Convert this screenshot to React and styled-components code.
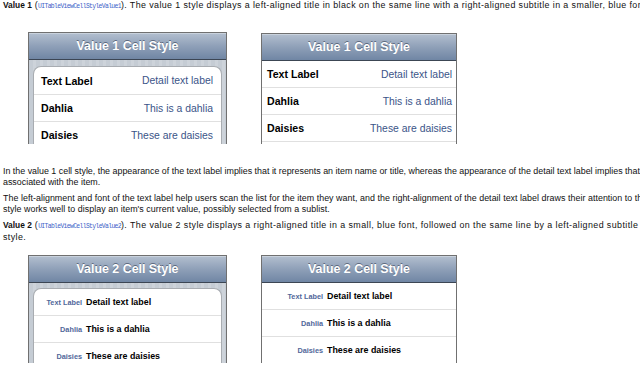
import React from 'react';
import styled, {createGlobalStyle} from 'styled-components';

const GlobalStyle = createGlobalStyle`
  html, body {
    margin: 0;
    background: #fff;
    overflow: hidden;
  }
  body {
    font-family: 'Liberation Sans', Arial, sans-serif;
    color: #111;
  }
`;

const Page = styled.div`
  width: 640px;
  height: 381px;
  overflow: hidden;
  padding: 0 3px;
  box-sizing: border-box;
`;

const Para = styled.p`
  margin: 0 0 5px 0;
  font-size: 8.9px;
  line-height: 11px;
  letter-spacing: ${p => p.$spacing || 0}px;
  white-space: nowrap;

  b {
    font-size: 8.4px;
    letter-spacing: 0;
  }
`;

const Code = styled.code`
  font-family: 'Liberation Mono', 'Courier New', monospace;
  font-size: 6.4px;
  letter-spacing: -0.65px;
  color: #3c62c8;
`;

const FigureRow = styled.div`
  display: flex;
  align-items: flex-start;
  gap: 34px;
  padding: ${p => p.$top}px 0 ${p => p.$bottom}px 25px;
`;

const Frame = styled.div`
  box-sizing: border-box;
  width: ${p => p.$width}px;
  height: ${p => p.$height}px;
  margin-top: ${p => p.$offset || 0}px;
  border: 1px solid #707070;
  border-bottom: none;
  overflow: hidden;
  background: ${p => p.$grouped
    ? 'repeating-linear-gradient(90deg, #c5ccd4 0 4px, #cdd3da 4px 7px)'
    : '#fff'};
`;

const NavBar = styled.div`
  height: ${p => p.$height}px;
  display: flex;
  align-items: center;
  justify-content: center;
  background: linear-gradient(#b3bfcf 0%, #8fa0b8 50%, #7086a4 100%);
  border-bottom: 1px solid #3c4654;
  box-shadow: inset 0 1px 0 #c9d2dd;
  color: #fff;
  font-size: 12.4px;
  font-weight: bold;
  text-shadow: 0 -1px 0 rgba(40, 50, 70, 0.55);
`;

const Card = styled.div`
  margin: ${p => p.$gap}px 4px 0 4px;
  background: #fff;
  border: 1px solid #a8acb1;
  border-bottom: none;
  border-radius: 8px 8px 0 0;
`;

const Row = styled.div`
  height: ${p => p.$height || 27}px;
  box-sizing: border-box;
  display: flex;
  align-items: center;
  gap: 4px;
  justify-content: ${p => p.$split ? 'space-between' : 'flex-start'};
  padding: 0 ${p => p.$padR || 0}px 0 ${p => p.$padL || 0}px;
  border-bottom: 1px solid #e0e0e0;
`;

const Title = styled.span`
  font-size: 10.6px;
  font-weight: bold;
  color: #000;
`;

const Detail = styled.span`
  font-size: 10.4px;
  color: #3b5488;
`;

const SmallLabel = styled.span`
  width: ${p => p.$width}px;
  text-align: right;
  font-size: 7.3px;
  font-weight: bold;
  color: #51679a;
`;

const BoldDetail = styled.span`
  font-size: 8.9px;
  font-weight: bold;
  color: #000;
`;

const items = [
  ['Text Label', 'Detail text label'],
  ['Dahlia', 'This is a dahlia'],
  ['Daisies', 'These are daisies'],
  ['', ''],
];

function Value1Rows({padL, padR, first}) {
  return items.map(([t, d], i) => (
    <Row key={i} $split $padL={padL} $padR={padR} $height={i === 0 ? first : 27}>
      <Title>{t}</Title>
      <Detail>{d}</Detail>
    </Row>
  ));
}

function Value2Rows({labelWidth, first}) {
  return items.map(([t, d], i) => (
    <Row key={i} $height={i === 0 ? first : 27}>
      <SmallLabel $width={labelWidth}>{t}</SmallLabel>
      <BoldDetail>{d}</BoldDetail>
    </Row>
  ));
}

export default function App() {
  return (
    <Page>
      <GlobalStyle />
      <Para $spacing={0.4}>
        <b>Value 1</b> (<Code>UITableViewCellStyleValue1</Code>). The value 1 style displays a left-aligned title in black on the same line with a right-aligned subtitle in a smaller, blue font.
      </Para>

      <FigureRow $top={15} $bottom={22}>
        <Frame $grouped $width={199} $height={112}>
          <NavBar $height={26}>Value 1 Cell Style</NavBar>
          <Card $gap={6}>
            <Value1Rows padL={7} padR={8} first={28} />
          </Card>
        </Frame>
        <Frame $width={196} $height={111} $offset={1}>
          <NavBar $height={26}>Value 1 Cell Style</NavBar>
          <Value1Rows padL={5} padR={4} first={27} />
        </Frame>
      </FigureRow>

      <Para>
        In the value 1 cell style, the appearance of the text label implies that it represents an item name or title, whereas the appearance of the detail text label implies that it provides additional information<br />
        associated with the item.
      </Para>
      <Para $spacing={0.04}>
        The left-alignment and font of the text label help users scan the list for the item they want, and the right-alignment of the detail text label draws their attention to the item's associated information. This<br />
        style works well to display an item's current value, possibly selected from a sublist.
      </Para>
      <Para $spacing={0.42}>
        <b>Value 2</b> (<Code>UITableViewCellStyleValue2</Code>). The value 2 style displays a right-aligned title in a small, blue font, followed on the same line by a left-aligned subtitle in a black font. The Contacts app uses this<br />
        style.
      </Para>

      <FigureRow $top={7} $bottom={0}>
        <Frame $grouped $width={199} $height={108}>
          <NavBar $height={26}>Value 2 Cell Style</NavBar>
          <Card $gap={5}>
            <Value2Rows labelWidth={48} first={27} />
          </Card>
        </Frame>
        <Frame $width={196} $height={108}>
          <NavBar $height={26}>Value 2 Cell Style</NavBar>
          <Value2Rows labelWidth={61} first={27} />
        </Frame>
      </FigureRow>
    </Page>
  );
}
